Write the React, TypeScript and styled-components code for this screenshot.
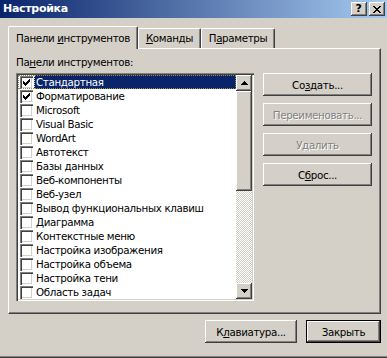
import React from "react";
import styled, { createGlobalStyle, css } from "styled-components";

const GlobalStyle = createGlobalStyle`
  html, body {
    margin: 0;
    padding: 0;
    background: #d4d0c8;
  }
  body {
    font-family: "DejaVu Sans", Tahoma, sans-serif;
    font-size: 10.3px;
    letter-spacing: -0.35px;
    color: #000;
  }
  u {
    text-decoration: underline;
    text-underline-offset: 1px;
  }
`;

const raised = css`
  box-shadow: inset -1px -1px #404040, inset 1px 1px #ffffff,
    inset -2px -2px #808080, inset 2px 2px #d4d0c8;
`;

const Window = styled.div`
  width: 387px;
  height: 358px;
  box-sizing: border-box;
  background: #d4d0c8;
  display: flex;
  flex-direction: column;
  box-shadow: inset 0 -1px #404040, inset 0 -2px #808080;
  overflow: hidden;
`;

const TitleBar = styled.div`
  height: 18px;
  flex: none;
  display: flex;
  align-items: center;
  justify-content: space-between;
  padding: 0 2px 0 3px;
  background: linear-gradient(to right, #0a246a, #a6caf0);
`;

const Caption = styled.span`
  color: #fff;
  font-weight: bold;
  font-size: 11px;
  letter-spacing: -0.3px;
  line-height: 18px;
`;

const CaptionButtons = styled.div`
  display: flex;
  gap: 2px;
`;

const CaptionButton = styled.div`
  width: 16px;
  height: 14px;
  background: #d4d0c8;
  ${raised};
  display: flex;
  align-items: center;
  justify-content: center;
  font-weight: bold;
  font-size: 11px;
  line-height: 14px;
  padding-right: 1px;
  box-sizing: border-box;
`;

const Body = styled.div`
  flex: 1;
  padding: 8px 6px 0 8px;
  display: flex;
  flex-direction: column;
`;

const TabRow = styled.div`
  display: flex;
  align-items: flex-end;
  height: 23px;
  margin-bottom: -1px;
  position: relative;
  z-index: 1;
`;

const Tab = styled.div<{ $active?: boolean; $w: number }>`
  width: ${(p) => p.$w}px;
  box-sizing: border-box;
  background: #d4d0c8;
  border-top: 1px solid #fff;
  border-left: 1px solid #fff;
  border-right: 1px solid #404040;
  border-top-left-radius: 2px;
  border-top-right-radius: 2px;
  box-shadow: inset -1px 0 #808080;
  display: flex;
  justify-content: center;
  white-space: nowrap;
  line-height: 13px;
  ${(p) =>
    p.$active
      ? css`
          height: 23px;
          padding-top: 5px;
        `
      : css`
          height: 20px;
          margin-bottom: 1px;
          padding-top: 3px;
        `}
`;

const Panel = styled.div`
  width: 373px;
  height: 266px;
  box-sizing: border-box;
  border-top: 1px solid #fff;
  border-left: 1px solid #fff;
  border-right: 1px solid #404040;
  border-bottom: 1px solid #404040;
  box-shadow: inset -1px -1px #808080;
  padding: 7px 0 0 7px;
`;

const Label = styled.div`
  line-height: 13px;
  height: 13px;
`;

const Content = styled.div`
  margin-top: 4px;
  display: flex;
  gap: 9px;
`;

const ListBox = styled.div`
  width: 238px;
  height: 228px;
  box-sizing: border-box;
  background: #fff;
  box-shadow: inset 1px 1px #808080, inset 2px 2px #404040,
    inset -1px -1px #ffffff, inset -2px -2px #d4d0c8;
  padding: 2px;
  display: flex;
`;

const Rows = styled.div`
  flex: 1;
  display: flex;
  flex-direction: column;
`;

const Row = styled.div<{ $selected?: boolean }>`
  height: 14px;
  display: flex;
  align-items: center;
  padding-left: 2px;
  position: relative;
  ${(p) =>
    p.$selected &&
    css`
      &::after {
        content: "";
        position: absolute;
        inset: 0;
        border: 1px dotted #9a8a50;
        pointer-events: none;
      }
    `}
`;

const CheckBox = styled.div`
  width: 13px;
  height: 13px;
  box-sizing: border-box;
  background: #fff;
  box-shadow: inset 1px 1px #808080, inset 2px 2px #404040,
    inset -1px -1px #ffffff, inset -2px -2px #d4d0c8;
  display: flex;
  align-items: center;
  justify-content: center;
  flex: none;
`;

const RowText = styled.span<{ $selected?: boolean }>`
  margin-left: 1px;
  padding: 0 2px;
  height: 14px;
  line-height: 14px;
  white-space: nowrap;
  flex: ${(p) => (p.$selected ? 1 : "none")};
  ${(p) =>
    p.$selected &&
    css`
      background: #0a246a;
      color: #fff;
      outline: 1px dotted #f0d890;
      outline-offset: -1px;
    `}
`;

const ScrollBar = styled.div`
  width: 16px;
  display: flex;
  flex-direction: column;
  background: repeating-conic-gradient(#ffffff 0 25%, #d4d0c8 0 50%) 0 0 / 2px
    2px;
`;

const ScrollButton = styled.div`
  width: 16px;
  height: 16px;
  flex: none;
  background: #d4d0c8;
  ${raised};
  display: flex;
  align-items: center;
  justify-content: center;
`;

const Thumb = styled.div`
  height: 100px;
  background: #d4d0c8;
  ${raised};
`;

const Track = styled.div`
  flex: 1;
`;

const SideButtons = styled.div`
  display: flex;
  flex-direction: column;
  gap: 7px;
`;

const Button = styled.div<{ $w?: number; $disabled?: boolean; $default?: boolean }>`
  width: ${(p) => p.$w ?? 109}px;
  height: 23px;
  box-sizing: border-box;
  background: #d4d0c8;
  ${raised};
  display: flex;
  align-items: center;
  justify-content: center;
  white-space: nowrap;
  ${(p) =>
    p.$disabled &&
    css`
      color: #808080;
      text-shadow: 1px 1px #ffffff;
    `}
  ${(p) =>
    p.$default &&
    css`
      border: 1px solid #000;
      box-shadow: inset -1px -1px #404040, inset 1px 1px #ffffff,
        inset -2px -2px #808080;
    `}
`;

const Footer = styled.div`
  margin-top: 6px;
  width: 373px;
  display: flex;
  justify-content: flex-end;
  gap: 9px;
`;

const Check = () => (
  <svg width="7" height="7" viewBox="0 0 7 7" shapeRendering="crispEdges">
    {[2, 3, 4, 3, 2, 1, 0].map((y, x) => (
      <rect key={x} x={x} y={y} width="1" height="3" fill="#000" />
    ))}
  </svg>
);

const ArrowUp = () => (
  <svg width="7" height="4" viewBox="0 0 7 4" shapeRendering="crispEdges">
    <path d="M3 0h1v1h1v1h1v1h1v1H0V3h1V2h1V1h1z" fill="#000" />
  </svg>
);

const ArrowDown = () => (
  <svg width="7" height="4" viewBox="0 0 7 4" shapeRendering="crispEdges">
    <path d="M0 0h7v1H6v1H5v1H4v1H3V3H2V2H1V1H0z" fill="#000" />
  </svg>
);

const CloseGlyph = () => (
  <svg width="8" height="7" viewBox="0 0 8 7" shapeRendering="crispEdges">
    <path
      d="M0 0h2v1h1v1h2V1h1V0h2v1H7v1H6v1H5v1h1v1h1v1h1v1H6V6H5V5H3v1H2v1H0V6h1V5h1V4h1V3H2V2H1V1H0z"
      fill="#000"
    />
  </svg>
);

const toolbars: { name: React.ReactNode; checked?: boolean }[] = [
  { name: "Стандартная", checked: true },
  { name: "Форматирование", checked: true },
  { name: "Microsoft" },
  { name: "Visual Basic" },
  { name: "WordArt" },
  { name: "Автотекст" },
  { name: "Базы данных" },
  { name: "Веб-компоненты" },
  { name: "Веб-узел" },
  { name: "Вывод функциональных клавиш" },
  { name: "Диаграмма" },
  { name: "Контекстные меню" },
  { name: "Настройка изображения" },
  { name: "Настройка объема" },
  { name: "Настройка тени" },
  { name: "Область задач" },
];

export default function App() {
  return (
    <>
      <GlobalStyle />
      <Window>
        <TitleBar>
          <Caption>Настройка</Caption>
          <CaptionButtons>
            <CaptionButton>?</CaptionButton>
            <CaptionButton>
              <CloseGlyph />
            </CaptionButton>
          </CaptionButtons>
        </TitleBar>
        <Body>
          <TabRow>
            <Tab $active $w={130}>
              <span>
                Панели <u>и</u>нструментов
              </span>
            </Tab>
            <Tab $w={63}>
              <span>
                <u>К</u>оманды
              </span>
            </Tab>
            <Tab $w={74}>
              <span>
                П<u>а</u>раметры
              </span>
            </Tab>
          </TabRow>
          <Panel>
            <Label>
              Па<u>н</u>ели инструментов:
            </Label>
            <Content>
              <ListBox>
                <Rows>
                  {toolbars.map((t, i) => (
                    <Row key={i} $selected={i === 0}>
                      <CheckBox>{t.checked && <Check />}</CheckBox>
                      <RowText $selected={i === 0}>{t.name}</RowText>
                    </Row>
                  ))}
                </Rows>
                <ScrollBar>
                  <ScrollButton>
                    <ArrowUp />
                  </ScrollButton>
                  <Thumb />
                  <Track />
                  <ScrollButton>
                    <ArrowDown />
                  </ScrollButton>
                </ScrollBar>
              </ListBox>
              <SideButtons>
                <Button>
                  <span>
                    Со<u>з</u>дать...
                  </span>
                </Button>
                <Button $disabled>Переименовать...</Button>
                <Button $disabled>Удалить</Button>
                <Button>
                  <span>
                    С<u>б</u>рос...
                  </span>
                </Button>
              </SideButtons>
            </Content>
          </Panel>
          <Footer>
            <Button $w={92}>
              <span>
                К<u>л</u>авиатура...
              </span>
            </Button>
            <Button $w={75} $default>
              Закрыть
            </Button>
          </Footer>
        </Body>
      </Window>
    </>
  );
}
